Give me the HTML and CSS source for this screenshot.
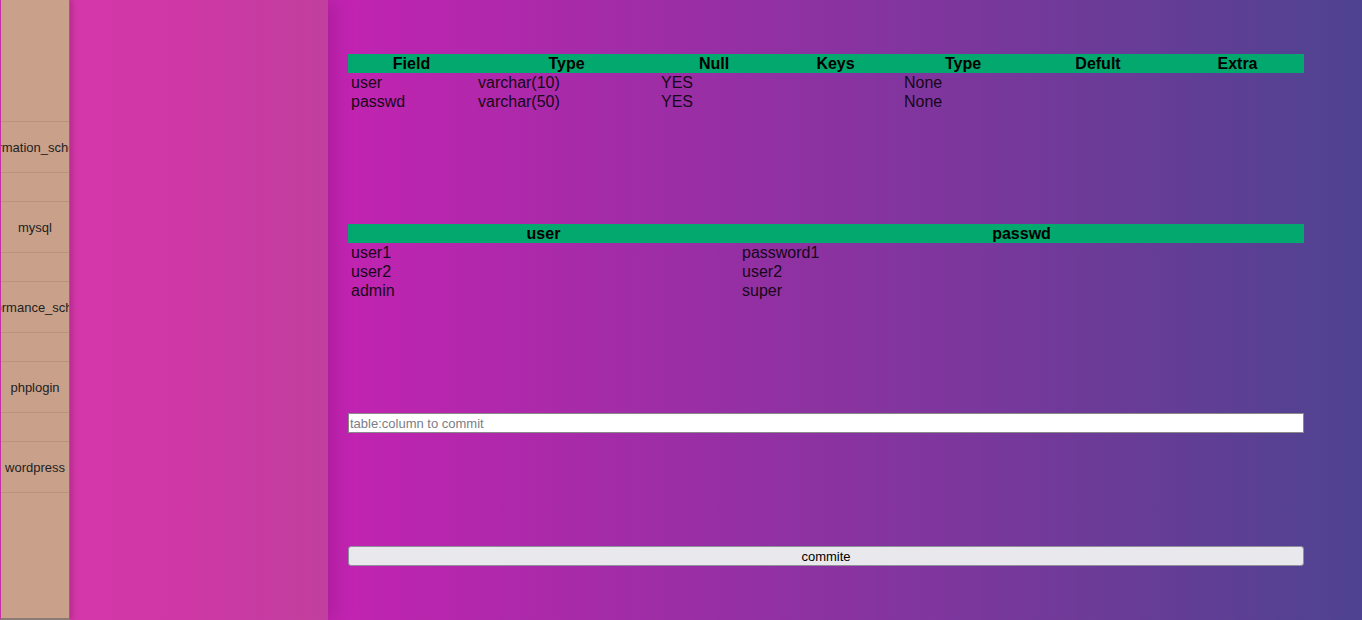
FILE: index.html
```html
<!DOCTYPE html>
<html>
<head>
<meta charset="utf-8">
<title>DB</title>
<link rel="stylesheet" href="styles.css">
</head>
<body>
<nav class="sidebar">
  <div class="db-item"><span>information_schema</span></div>
  <div class="db-item"><span>mysql</span></div>
  <div class="db-item"><span>performance_schema</span></div>
  <div class="db-item"><span>phplogin</span></div>
  <div class="db-item"><span>wordpress</span></div>
</nav>
<aside class="panel"></aside>
<main class="main">
  <div class="content">
    <table class="grid">
      <colgroup>
        <col style="width:127px"><col style="width:183px"><col style="width:112px"><col style="width:131px"><col style="width:124px"><col style="width:146px"><col style="width:133px">
      </colgroup>
      <thead>
        <tr><th>Field</th><th>Type</th><th>Null</th><th>Keys</th><th>Type</th><th>Defult</th><th>Extra</th></tr>
      </thead>
      <tbody>
        <tr><td>user</td><td>varchar(10)</td><td>YES</td><td></td><td>None</td><td></td><td></td></tr>
        <tr><td>passwd</td><td>varchar(50)</td><td>YES</td><td></td><td>None</td><td></td><td></td></tr>
      </tbody>
    </table>
    <table class="grid">
      <colgroup>
        <col style="width:391px"><col style="width:565px">
      </colgroup>
      <thead>
        <tr><th>user</th><th>passwd</th></tr>
      </thead>
      <tbody>
        <tr><td>user1</td><td>password1</td></tr>
        <tr><td>user2</td><td>user2</td></tr>
        <tr><td>admin</td><td>super</td></tr>
      </tbody>
    </table>
    <input class="commit-input" type="text" placeholder="table:column to commit">
    <button class="commit-btn" type="button">commite</button>
  </div>
</main>
</body>
</html>
```
FILE: styles.css
```css
html, body {
  margin: 0;
  padding: 0;
  height: 620px;
  overflow: hidden;
}
body {
  display: flex;
  font-family: "Liberation Sans", Arial, sans-serif;
  background: #c42fa6;
}
.sidebar {
  position: relative;
  z-index: 3;
  width: 70px;
  height: 620px;
  box-sizing: border-box;
  flex: none;
  background: #c9a08a;
  border-left: 1px solid #c52ea7;
  border-right: 1px solid #8e6d5f;
  border-bottom: 2px solid #8c7b72;
  box-shadow: 2px 0 6px rgba(60, 0, 40, 0.25);
  display: flex;
  flex-direction: column;
  gap: 28px;
  padding-top: 121px;
}
.db-item {
  height: 50px;
  border-top: 1px solid #ba917c;
  border-bottom: 1px solid #ba917c;
  display: flex;
  align-items: center;
  justify-content: center;
  overflow: hidden;
  font-size: 13px;
  color: #222;
  white-space: nowrap;
}
.db-item span {
  flex: none;
}
.panel {
  position: relative;
  z-index: 2;
  width: 258px;
  flex: none;
  background: linear-gradient(90deg, #d537aa 0%, #cf37a6 40%, #c13f9e 100%);
  box-shadow: 6px 0 18px rgba(60, 0, 60, 0.18);
}
.main {
  flex: 1;
  background: linear-gradient(90deg, #c323b1 0%, #8933a0 50%, #4e4390 100%);
  padding: 54px 0 0 20px;
}
.content {
  width: 956px;
  display: flex;
  flex-direction: column;
  gap: 113px;
}
.grid {
  width: 956px;
  table-layout: fixed;
  border-collapse: collapse;
  border-spacing: 0;
  font-size: 16px;
}
.grid th {
  background: #03a86f;
  color: #000;
  font-weight: bold;
  text-align: center;
  padding: 0;
  line-height: 19px;
}
.grid td {
  color: #160818;
  text-align: left;
  padding: 0 0 0 3px;
  line-height: 19px;
}
.commit-input {
  width: 956px;
  height: 20px;
  box-sizing: border-box;
  margin: 0;
  padding: 0 1px;
  border: 1px solid #8a8a8a;
  background: #fff;
  font-family: "Liberation Sans", Arial, sans-serif;
  font-size: 13px;
  color: #000;
}
.commit-input::placeholder {
  color: #7b7d87;
}
.commit-btn {
  width: 956px;
  height: 20px;
  box-sizing: border-box;
  margin: 0;
  padding: 0;
  border: 1px solid #8f8f9d;
  border-radius: 3px;
  background: #e9e9ed;
  font-family: "Liberation Sans", Arial, sans-serif;
  font-size: 13px;
  color: #000;
}
```
